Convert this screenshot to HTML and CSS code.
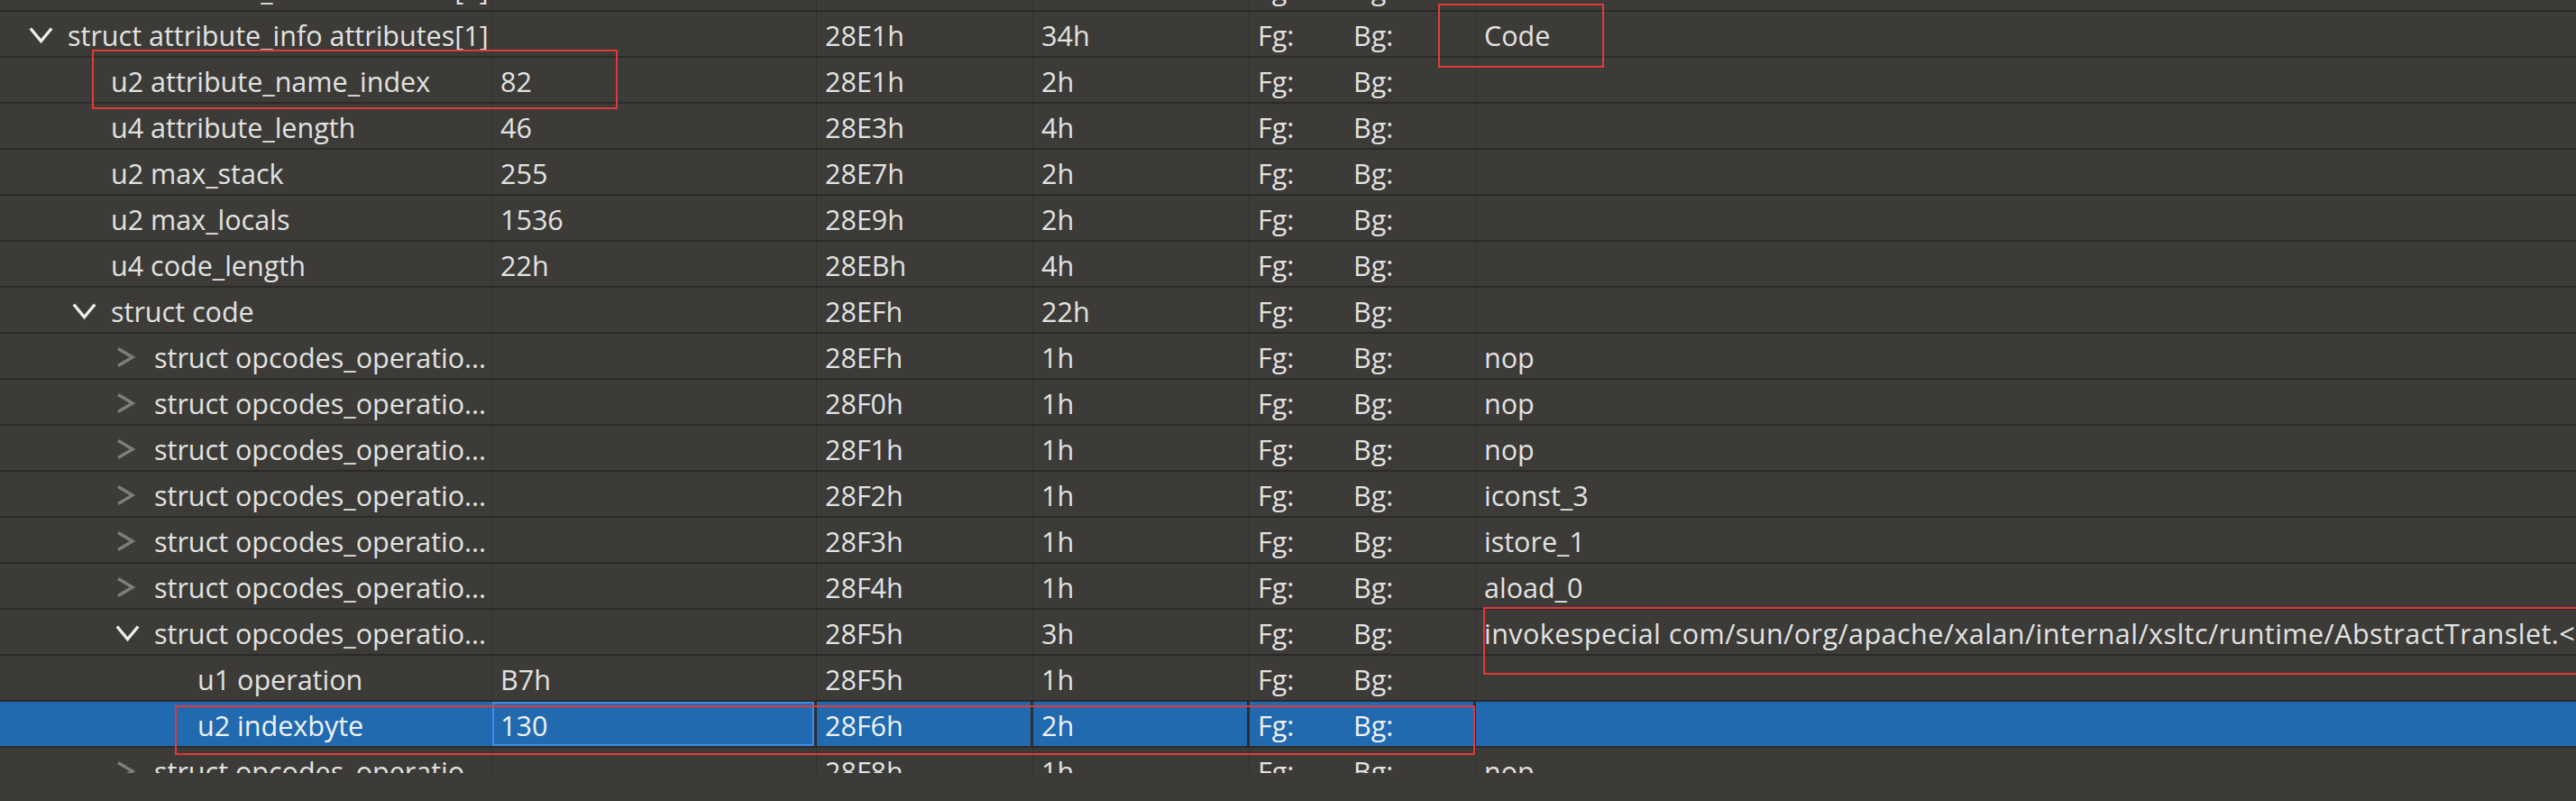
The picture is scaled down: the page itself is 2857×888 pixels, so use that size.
FILE: index.html
```html
<!DOCTYPE html>
<html lang="en">
<head>
<meta charset="utf-8">
<title>Template Results</title>
<link rel="stylesheet" href="styles.css">
</head>
<body>
<div class="screen">
  <div class="viewport">
    <div class="rows">
      <div class="row">
        <div class="cell name lv1"><span class="chev"></span><span class="label">struct attribute_info attributes[1]</span></div>
        <div class="cell"></div>
        <div class="cell">28A9h</div>
        <div class="cell">34h</div>
        <div class="cell color"><span class="fg">Fg:</span><span>Bg:</span></div>
        <div class="cell comment"></div>
      </div>
      <div class="row">
        <div class="cell name lv1"><span class="chev"><svg viewBox="0 0 28 28" class="open"><polyline points="1.8,6.5 13.5,20.5 25.2,6.5"/></svg></span><span class="label">struct attribute_info attributes[1]</span></div>
        <div class="cell"></div>
        <div class="cell">28E1h</div>
        <div class="cell">34h</div>
        <div class="cell color"><span class="fg">Fg:</span><span>Bg:</span></div>
        <div class="cell comment">Code</div>
      </div>
      <div class="row">
        <div class="cell name lv2"><span class="chev"></span><span class="label">u2 attribute_name_index</span></div>
        <div class="cell">82</div>
        <div class="cell">28E1h</div>
        <div class="cell">2h</div>
        <div class="cell color"><span class="fg">Fg:</span><span>Bg:</span></div>
        <div class="cell comment"></div>
      </div>
      <div class="row">
        <div class="cell name lv2"><span class="chev"></span><span class="label">u4 attribute_length</span></div>
        <div class="cell">46</div>
        <div class="cell">28E3h</div>
        <div class="cell">4h</div>
        <div class="cell color"><span class="fg">Fg:</span><span>Bg:</span></div>
        <div class="cell comment"></div>
      </div>
      <div class="row">
        <div class="cell name lv2"><span class="chev"></span><span class="label">u2 max_stack</span></div>
        <div class="cell">255</div>
        <div class="cell">28E7h</div>
        <div class="cell">2h</div>
        <div class="cell color"><span class="fg">Fg:</span><span>Bg:</span></div>
        <div class="cell comment"></div>
      </div>
      <div class="row">
        <div class="cell name lv2"><span class="chev"></span><span class="label">u2 max_locals</span></div>
        <div class="cell">1536</div>
        <div class="cell">28E9h</div>
        <div class="cell">2h</div>
        <div class="cell color"><span class="fg">Fg:</span><span>Bg:</span></div>
        <div class="cell comment"></div>
      </div>
      <div class="row">
        <div class="cell name lv2"><span class="chev"></span><span class="label">u4 code_length</span></div>
        <div class="cell">22h</div>
        <div class="cell">28EBh</div>
        <div class="cell">4h</div>
        <div class="cell color"><span class="fg">Fg:</span><span>Bg:</span></div>
        <div class="cell comment"></div>
      </div>
      <div class="row">
        <div class="cell name lv2"><span class="chev"><svg viewBox="0 0 28 28" class="open"><polyline points="1.8,6.5 13.5,20.5 25.2,6.5"/></svg></span><span class="label">struct code</span></div>
        <div class="cell"></div>
        <div class="cell">28EFh</div>
        <div class="cell">22h</div>
        <div class="cell color"><span class="fg">Fg:</span><span>Bg:</span></div>
        <div class="cell comment"></div>
      </div>
      <div class="row">
        <div class="cell name lv3"><span class="chev"><svg viewBox="0 0 28 28" class="closed"><polyline points="3,4.5 19,14 3,23.5"/></svg></span><span class="label">struct opcodes_operatio...</span></div>
        <div class="cell"></div>
        <div class="cell">28EFh</div>
        <div class="cell">1h</div>
        <div class="cell color"><span class="fg">Fg:</span><span>Bg:</span></div>
        <div class="cell comment">nop</div>
      </div>
      <div class="row">
        <div class="cell name lv3"><span class="chev"><svg viewBox="0 0 28 28" class="closed"><polyline points="3,4.5 19,14 3,23.5"/></svg></span><span class="label">struct opcodes_operatio...</span></div>
        <div class="cell"></div>
        <div class="cell">28F0h</div>
        <div class="cell">1h</div>
        <div class="cell color"><span class="fg">Fg:</span><span>Bg:</span></div>
        <div class="cell comment">nop</div>
      </div>
      <div class="row">
        <div class="cell name lv3"><span class="chev"><svg viewBox="0 0 28 28" class="closed"><polyline points="3,4.5 19,14 3,23.5"/></svg></span><span class="label">struct opcodes_operatio...</span></div>
        <div class="cell"></div>
        <div class="cell">28F1h</div>
        <div class="cell">1h</div>
        <div class="cell color"><span class="fg">Fg:</span><span>Bg:</span></div>
        <div class="cell comment">nop</div>
      </div>
      <div class="row">
        <div class="cell name lv3"><span class="chev"><svg viewBox="0 0 28 28" class="closed"><polyline points="3,4.5 19,14 3,23.5"/></svg></span><span class="label">struct opcodes_operatio...</span></div>
        <div class="cell"></div>
        <div class="cell">28F2h</div>
        <div class="cell">1h</div>
        <div class="cell color"><span class="fg">Fg:</span><span>Bg:</span></div>
        <div class="cell comment">iconst_3</div>
      </div>
      <div class="row">
        <div class="cell name lv3"><span class="chev"><svg viewBox="0 0 28 28" class="closed"><polyline points="3,4.5 19,14 3,23.5"/></svg></span><span class="label">struct opcodes_operatio...</span></div>
        <div class="cell"></div>
        <div class="cell">28F3h</div>
        <div class="cell">1h</div>
        <div class="cell color"><span class="fg">Fg:</span><span>Bg:</span></div>
        <div class="cell comment">istore_1</div>
      </div>
      <div class="row">
        <div class="cell name lv3"><span class="chev"><svg viewBox="0 0 28 28" class="closed"><polyline points="3,4.5 19,14 3,23.5"/></svg></span><span class="label">struct opcodes_operatio...</span></div>
        <div class="cell"></div>
        <div class="cell">28F4h</div>
        <div class="cell">1h</div>
        <div class="cell color"><span class="fg">Fg:</span><span>Bg:</span></div>
        <div class="cell comment">aload_0</div>
      </div>
      <div class="row">
        <div class="cell name lv3"><span class="chev"><svg viewBox="0 0 28 28" class="open"><polyline points="1.8,6.5 13.5,20.5 25.2,6.5"/></svg></span><span class="label">struct opcodes_operatio...</span></div>
        <div class="cell"></div>
        <div class="cell">28F5h</div>
        <div class="cell">3h</div>
        <div class="cell color"><span class="fg">Fg:</span><span>Bg:</span></div>
        <div class="cell comment wide">invokespecial com/sun/org/apache/xalan/internal/xsltc/runtime/AbstractTranslet.&lt;init&gt;</div>
      </div>
      <div class="row">
        <div class="cell name lv4"><span class="chev"></span><span class="label">u1 operation</span></div>
        <div class="cell">B7h</div>
        <div class="cell">28F5h</div>
        <div class="cell">1h</div>
        <div class="cell color"><span class="fg">Fg:</span><span>Bg:</span></div>
        <div class="cell comment"></div>
      </div>
      <div class="row selected">
        <div class="cell name lv4"><span class="chev"></span><span class="label">u2 indexbyte</span></div>
        <div class="cell focus">130</div>
        <div class="cell">28F6h</div>
        <div class="cell">2h</div>
        <div class="cell color"><span class="fg">Fg:</span><span>Bg:</span></div>
        <div class="cell comment"></div>
      </div>
      <div class="row">
        <div class="cell name lv3"><span class="chev"><svg viewBox="0 0 28 28" class="closed"><polyline points="3,4.5 19,14 3,23.5"/></svg></span><span class="label">struct opcodes_operatio...</span></div>
        <div class="cell"></div>
        <div class="cell">28F8h</div>
        <div class="cell">1h</div>
        <div class="cell color"><span class="fg">Fg:</span><span>Bg:</span></div>
        <div class="cell comment">nop</div>
      </div>
    </div>
  </div>
  <div class="hscroll"></div>

  <div class="mark mark-name"></div>
  <div class="mark mark-code"></div>
  <div class="mark mark-invoke"></div>
  <div class="mark mark-sel"></div>
</div>
</body>
</html>
```

FILE: styles.css
```css
html, body {
  margin: 0;
  padding: 0;
  background: #3c3b37;
}

body {
  width: 2857px;
  height: 888px;
  overflow: hidden;
  font-family: "Open Sans", "Noto Sans", sans-serif;
  font-size: 30.5px;
  color: #e2e2e2;
}

.screen {
  position: relative;
  width: 2857px;
  height: 888px;
  display: flex;
  flex-direction: column;
}

.viewport {
  height: 857px;
  overflow: hidden;
}

.rows {
  margin-top: -38px;
  display: flex;
  flex-direction: column;
}

.row {
  display: grid;
  grid-template-columns: 546px 360px 240px 240px 251px 1fr;
  height: 51px;
  box-sizing: border-box;
  border-bottom: 2px solid #2b2a28;
}

.cell {
  box-sizing: border-box;
  height: 49px;
  padding: 3px 0 0 9px;
  line-height: 46px;
  white-space: nowrap;
  overflow: hidden;
  border-right: 1px solid #31302d;
  display: flex;
  align-items: center;
}

.cell.comment {
  border-right: none;
}

.cell.wide {
  letter-spacing: 0.45px;
}

.name {
  padding-left: 0;
}

.lv1 { padding-left: 32px; }
.lv2 { padding-left: 80px; }
.lv3 { padding-left: 128px; }
.lv4 { padding-left: 176px; }

.chev {
  flex: 0 0 43px;
  width: 43px;
  height: 46px;
  display: flex;
  align-items: center;
}

.chev svg {
  width: 28px;
  height: 28px;
  display: block;
  fill: none;
  stroke-width: 3.4;
  stroke-linejoin: miter;
  stroke-linecap: butt;
}

.chev svg.open {
  stroke: #ececec;
}

.chev svg.closed {
  stroke: #7e7e7c;
}

.label {
  overflow: hidden;
}

.color .fg {
  width: 106px;
  flex: 0 0 106px;
}

.hscroll {
  flex: 1;
  background: #3c3b37;
}

/* selected row */
.row.selected {
  border-bottom-color: #2a2b2c;
}

.row.selected .cell {
  background: #226ab0;
  color: #eef2f6;
  border-right: 3px solid #2b2d30;
}

.row.selected .cell.name {
  border-right: 1px solid #226ab0;
}

.row.selected .cell.comment {
  border-right: none;
}

.row.selected .cell.focus {
  box-shadow: inset 0 0 0 2px #3a8ee6;
}

/* red annotation boxes drawn over the screenshot */
.mark {
  position: absolute;
  border: 2px solid #e23a3a;
  box-sizing: border-box;
  pointer-events: none;
}

.mark-name {
  left: 102px;
  top: 55px;
  width: 583px;
  height: 66px;
}

.mark-code {
  left: 1595px;
  top: 4px;
  width: 184px;
  height: 71px;
}

.mark-invoke {
  left: 1645px;
  top: 673px;
  width: 1230px;
  height: 75px;
}

.mark-sel {
  left: 194px;
  top: 782px;
  width: 1442px;
  height: 55px;
}
```
